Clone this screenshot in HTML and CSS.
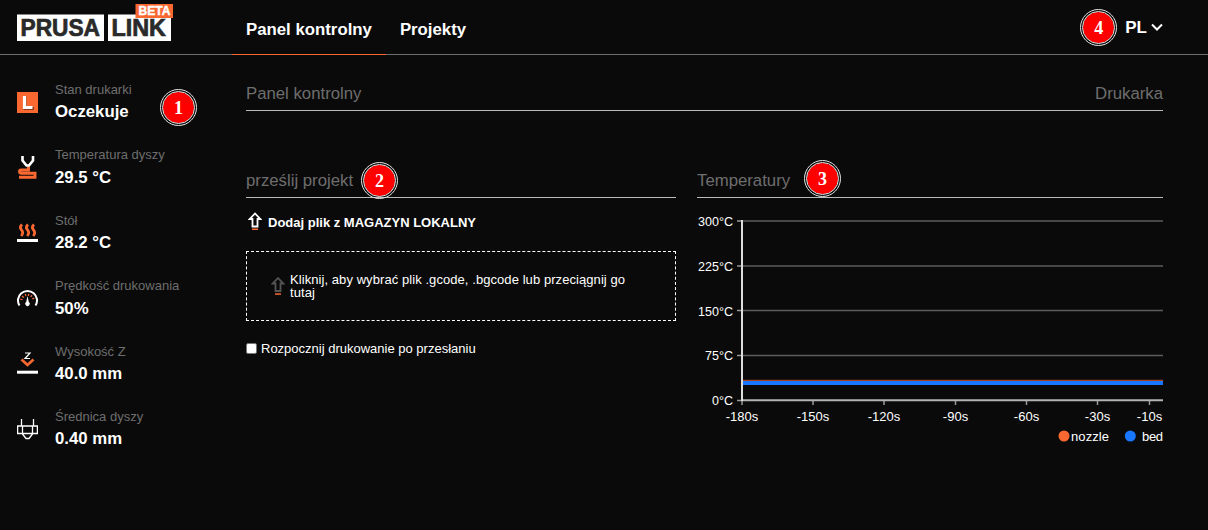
FILE: index.html
```html
<!DOCTYPE html>
<html lang="pl">
<head>
<meta charset="utf-8">
<title>PrusaLink</title>
<link rel="stylesheet" href="styles.css">
</head>
<body>
<header class="topbar">
  <svg class="logo" width="160" height="40" viewBox="0 0 160 40" role="img" aria-label="PrusaLink Beta">
    <path fill="#fff" d="M0 10.5h87V37H0zM91 10.5h63V37H91z"/>
    <text class="logo-word" x="3.5" y="32" textLength="79.5" lengthAdjust="spacingAndGlyphs">PRUSA</text>
    <text class="logo-word" x="94.500" y="32" textLength="54.500" lengthAdjust="spacingAndGlyphs">LINK</text>
    <path fill="#fa6831" d="M118.500 0h37.500v14h-37.500z"/>
    <text class="logo-beta" x="121.500" y="11" textLength="32" lengthAdjust="spacingAndGlyphs">BETA</text>
  </svg>
  <nav class="nav">
    <a class="nav-item active">Panel kontrolny</a>
    <a class="nav-item">Projekty</a>
  </nav>
  <div class="lang">
    <span class="marker">4</span>
    <span class="lang-name">PL</span>
    <svg width="14" height="10" viewBox="0 0 14 10"><path d="M2 2.500l5 5 5-5" fill="none" stroke="#fff" stroke-width="2"/></svg>
  </div>
</header>
<div class="layout">
  <aside class="sidebar">
    <div class="stat">
      <svg class="icon" viewBox="0 0 21 30"><path fill="#fa6831" d="M0 5h21v21H0z"/><path d="M8 9.500v12h9" fill="none" stroke="#8a3a1c" stroke-width="3"/><path d="M7.500 9v11.500h8" fill="none" stroke="#fff" stroke-width="3.200"/></svg>
      <div><div class="label">Stan drukarki</div><div class="value">Oczekuje</div></div>
      <span class="marker state-marker">1</span>
    </div>
    <div class="stat">
      <svg class="icon" viewBox="0 0 21 30"><path d="M11.500 14.500v3.500H4q-1.500 0-1.500 1.500T4 21.200h14v4H2" fill="none" stroke="#fa6831" stroke-width="2.900"/><path d="M5.500 4v4.500l4 5h2.500l4-5V4" fill="none" stroke="#fff" stroke-width="2.600"/></svg>
      <div><div class="label">Temperatura dyszy</div><div class="value">29.5 °C</div></div>
    </div>
    <div class="stat">
      <svg class="icon" viewBox="0 0 21 30"><path d="M5 6.500q-3 2.800-.5 5.500t-.3 6M11 6.500q-3 2.800-.5 5.500t-.3 6M17 6.500q-3 2.800-.5 5.500t-.3 6" fill="none" stroke="#fa6831" stroke-width="2.700"/><path fill="#fff" d="M0 21h21v3H0z"/></svg>
      <div><div class="label">Stół</div><div class="value">28.2 °C</div></div>
    </div>
    <div class="stat">
      <svg class="icon" viewBox="0 0 21 30"><path d="M2.500 22.500A9.500 9.500 0 1 1 18.500 22.500" fill="none" stroke="#fff" stroke-width="2"/><path d="M4.300 17a6.300 6.300 0 0 1 12.400 0" fill="none" stroke="#fa6831" stroke-width="2.200" stroke-dasharray="1.300 1.700"/><path fill="#fff" d="M10.500 13l1.300 6a2.200 2.200 0 1 1-2.600 0z"/></svg>
      <div><div class="label">Prędkość drukowania</div><div class="value">50%</div></div>
    </div>
    <div class="stat">
      <svg class="icon" viewBox="0 0 21 30"><path d="M8 4h5l-5 5.500h5" fill="none" stroke="#fff" stroke-width="1.200"/><path d="M4.500 10.500l6 5.500 6-5.500" fill="none" stroke="#fa6831" stroke-width="2.700"/><path fill="#fff" d="M0 21.700h21v3H0z"/></svg>
      <div><div class="label">Wysokość Z</div><div class="value">40.0 mm</div></div>
    </div>
    <div class="stat">
      <svg class="icon" viewBox="0 0 21 30"><path d="M4.500 5v6.500M16.500 5v6.500M.6 12h19.800v7.500H.6zM5.500 12v7.500M15.500 12v7.500M5.500 20l3.500 4.500h3l3.500-4.500" fill="none" stroke="#fff" stroke-width="1.300"/></svg>
      <div><div class="label">Średnica dyszy</div><div class="value">0.40 mm</div></div>
    </div>
  </aside>
  <main class="main">
    <div class="heading page-heading"><span>Panel kontrolny</span><span>Drukarka</span></div>
    <div class="columns">
      <section class="upload">
        <h2 class="heading">prześlij projekt<span class="marker upload-marker">2</span></h2>
        <div class="target">
          <svg width="14" height="20" viewBox="0 0 14 20"><path d="M7 1.500L1.800 7h2.700V14.500h5V7h2.700z" fill="none" stroke="#fff" stroke-width="1.800"/><path fill="#fa6831" d="M4 16.500h6V18H4z"/></svg>
          <span>Dodaj plik z MAGAZYN LOKALNY</span>
        </div>
        <div class="dropzone">
          <svg width="14" height="20" viewBox="0 0 14 20"><path d="M7 2L1.800 7.500h2.700V15h5V7.500h2.700z" fill="none" stroke="#555" stroke-width="1.800"/><path fill="#fa6831" d="M4 17.300h6v1.500H4z"/></svg>
          <span>Kliknij, aby wybrać plik .gcode, .bgcode lub przeciągnij go tutaj</span>
        </div>
        <label class="check"><span class="box"></span>Rozpocznij drukowanie po przesłaniu</label>
      </section>
      <section class="temps">
        <h2 class="heading">Temperatury<span class="marker temps-marker">3</span></h2>
        <svg class="chart" width="466" height="250" viewBox="697 198 466 250">
          <path d="M742 221h421M742 266h421M742 310.500h421M742 355.500h421" stroke="#5c5c5c" stroke-width="1.500"/>
          <path d="M742 380.700h421" stroke="#a8401c" stroke-width="2"/>
          <path d="M742 383h421" stroke="#1976ff" stroke-width="4"/>
          <path d="M737 221h5M737 266h5M737 310.500h5M737 355.500h5M737 400.500h5M742 400v5M813 400v5M884 400v5M955.500 400v5M1026.500 400v5M1097.500 400v5M1149.500 400v5" stroke="#999" stroke-width="1.500"/>
          <path d="M742 400.300h421" stroke="#b4b4b4" stroke-width="2"/>
          <path d="M742 220v181" stroke="#ddd" stroke-width="2"/>
          <g class="axis y">
            <text x="733" y="226" textLength="35" lengthAdjust="spacingAndGlyphs">300°C</text><text x="733" y="271" textLength="35" lengthAdjust="spacingAndGlyphs">225°C</text><text x="733" y="315.500" textLength="35" lengthAdjust="spacingAndGlyphs">150°C</text><text x="733" y="360" textLength="28" lengthAdjust="spacingAndGlyphs">75°C</text><text x="733" y="405" textLength="21" lengthAdjust="spacingAndGlyphs">0°C</text>
          </g>
          <g class="axis x">
            <text x="742" y="421">-180s</text><text x="813" y="421">-150s</text><text x="884" y="421">-120s</text><text x="955.500" y="421">-90s</text><text x="1026.500" y="421">-60s</text><text x="1097.500" y="421">-30s</text><text x="1149.500" y="421">-10s</text>
          </g>
          <circle cx="1064" cy="436" r="5.500" fill="#fa6831"/><circle cx="1130.300" cy="436" r="5.500" fill="#1976ff"/>
          <text class="axis" x="1071" y="441" textLength="38">nozzle</text><text class="axis" x="1142" y="441" textLength="21">bed</text>
        </svg>
      </section>
    </div>
  </main>
</div>
</body>
</html>
```
FILE: styles.css
```css
* { box-sizing: border-box; }
body {
  margin: 0;
  min-height: 530px;
  background: #0a0a0a;
  color: #fff;
  font-family: "Liberation Sans", Arial, sans-serif;
  font-size: 13px;
}
.topbar {
  display: flex;
  height: 55px;
  padding: 0 44px 0 17px;
  border-bottom: 1px solid #6e6e6e;
}
.logo { margin-top: 4px; }
.logo-word { fill: #2a2a2a; stroke: #2a2a2a; stroke-width: .7px; font-weight: bold; font-size: 23px; }
.logo-beta { fill: #fff; stroke: #fff; stroke-width: .4px; font-weight: bold; font-size: 12px; }
.nav { display: flex; margin-left: 55px; }
.nav-item {
  height: 55px;
  padding: 0 14px;
  font-size: 16.8px;
  font-weight: bold;
  line-height: 59px;
}
.nav-item.active { border-bottom: 1px solid #fa6831; }
.lang {
  display: flex;
  align-items: center;
  height: 54px;
  margin-left: auto;
  font-size: 17px;
  font-weight: bold;
}
.lang .marker { margin-right: 8px; }
.lang-name { padding-top: 1px; }
.lang svg { margin-left: 3px; }
.marker {
  display: inline-block;
  width: 37px;
  height: 37px;
  border: 3px double #e4e4e4;
  border-radius: 50%;
  background: #f00 padding-box;
  color: #fff;
  font: bold 18px/32px "Liberation Serif", serif;
  text-align: center;
}
.layout { display: flex; }
.sidebar { width: 246px; padding: 26px 0 0 17px; }
.stat { position: relative; display: flex; height: 65.4px; }
.icon { width: 21px; height: 30px; margin: 6px 17px 0 0; }
.label { color: #6e6e6e; line-height: 17px; }
.value { font-size: 16.8px; font-weight: bold; line-height: 20px; margin-top: 4.4px; }
.state-marker { position: absolute; left: 143px; top: 8px; }
.main { width: 917px; padding-top: 21px; }
.heading {
  position: relative;
  margin: 0;
  height: 35px;
  border-bottom: 1px solid #bbb;
  color: #6e6e6e;
  font-size: 16.75px;
  font-weight: normal;
  line-height: 35px;
}
.page-heading { display: flex; justify-content: space-between; }
.columns { display: grid; grid-template-columns: 430px 466px; gap: 21px; padding-top: 52px; }
.upload-marker { position: absolute; left: 115px; top: -1px; }
.temps-marker { position: absolute; left: 107px; top: -3px; }
.target { display: flex; align-items: center; gap: 6px; height: 20px; margin: 14px 0 0 2px; font-weight: bold; }
.dropzone {
  display: flex;
  align-items: center;
  gap: 5px;
  height: 70px;
  margin-top: 19px;
  padding: 0 40px 0 24px;
  border: 1px dashed #fff;
  line-height: 13px;
  letter-spacing: .07px;
}
.dropzone svg { flex: none; }
.check { display: flex; align-items: center; gap: 4px; height: 16px; margin-top: 19px; }
.box { width: 11px; height: 11px; border: 1px solid #767676; border-radius: 2px; background: #fff; }
.chart { display: block; }
.axis { fill: #fff; font-size: 13px; }
.y { text-anchor: end; }
.x { text-anchor: middle; }
```
